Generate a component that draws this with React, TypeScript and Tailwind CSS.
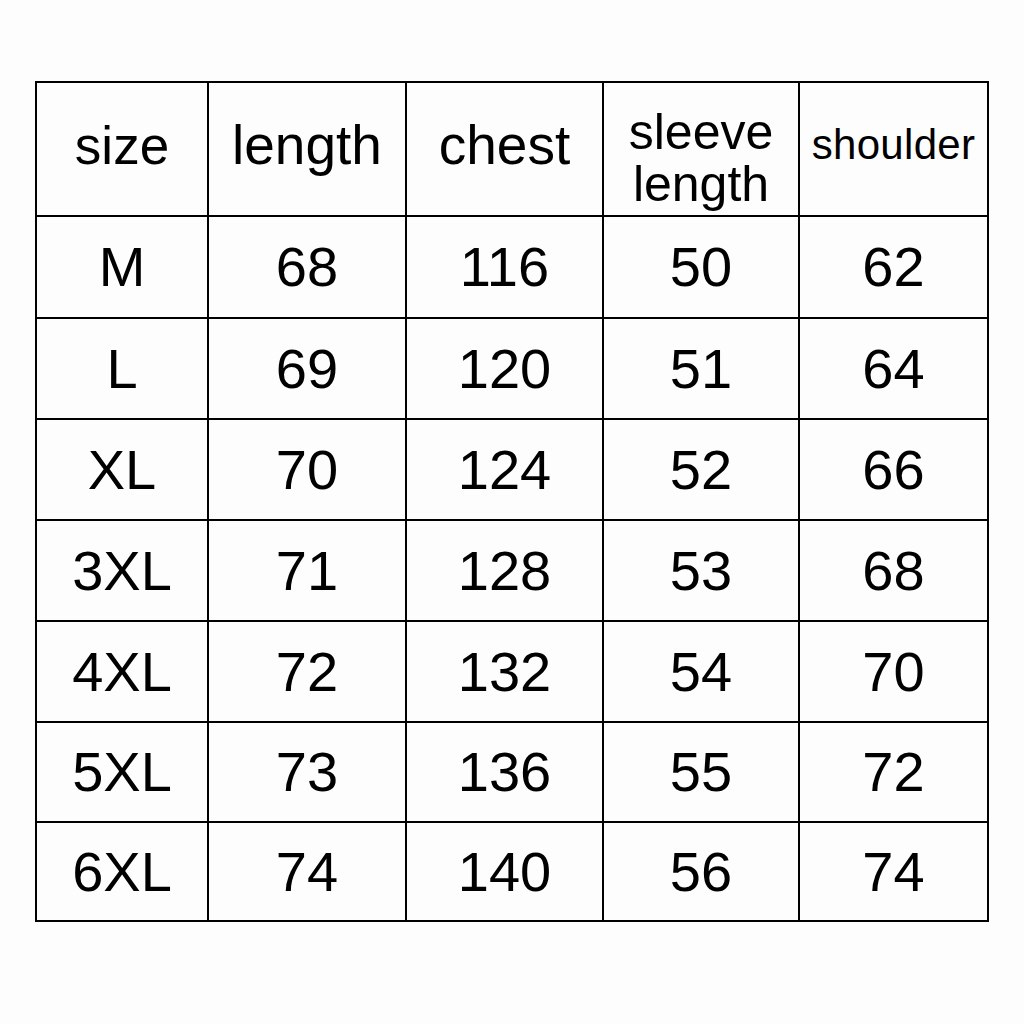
import React from 'react';

const rows = [
  { h: 'h-[102px]', c: ['M', '68', '116', '50', '62'] },
  { h: 'h-[101px]', c: ['L', '69', '120', '51', '64'] },
  { h: 'h-[101px]', c: ['XL', '70', '124', '52', '66'] },
  { h: 'h-[101px]', c: ['3XL', '71', '128', '53', '68'] },
  { h: 'h-[101px]', c: ['4XL', '72', '132', '54', '70'] },
  { h: 'h-[100px]', c: ['5XL', '73', '136', '55', '72'] },
  { h: 'h-[99px]', c: ['6XL', '74', '140', '56', '74'] },
];

export default function App() {
  return (
    <div className="w-[1024px] h-[1024px] bg-[#fdfdfd] pt-[81px] pl-[35px] font-['Liberation_Sans',Arial,sans-serif] text-black">
      <table className="table-fixed border-collapse w-[952px]">
        <colgroup>
          <col className="w-[172px]" />
          <col className="w-[198px]" />
          <col className="w-[197px]" />
          <col className="w-[196px]" />
          <col className="w-[189px]" />
        </colgroup>
        <thead>
          <tr className="h-[134px]">
            <th className="border-2 border-black font-normal text-[53px] leading-none p-0 pb-[8px]">size</th>
            <th className="border-2 border-black font-normal text-[55px] leading-none p-0 pb-[8px]">length</th>
            <th className="border-2 border-black font-normal text-[55px] leading-none p-0 pb-[8px]">chest</th>
            <th className="border-2 border-black font-normal text-[50px] leading-[52px] p-0 pt-[23px] align-top">
              sleeve
              <br />
              length
            </th>
            <th className="border-2 border-black font-normal text-[42px] leading-none p-0 tracking-[0.3px] align-top pt-[41px]">
              shoulder
            </th>
          </tr>
        </thead>
        <tbody>
          {rows.map((r, i) => (
            <tr key={i} className={r.h}>
              {r.c.map((c, j) => (
                <td key={j} className="border-2 border-black text-center text-[56px] leading-none p-0">
                  {c}
                </td>
              ))}
            </tr>
          ))}
        </tbody>
      </table>
    </div>
  );
}
